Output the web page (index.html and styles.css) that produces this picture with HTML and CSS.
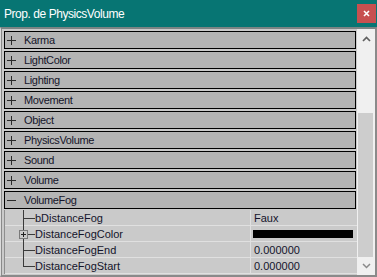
FILE: index.html
```html
<!DOCTYPE html>
<html>
<head>
<meta charset="utf-8">
<link rel="stylesheet" href="styles.css">
</head>
<body>
<div class="window">
  <div class="titlebar">
    <span class="title">Prop. de PhysicsVolume</span>
    <div class="close"><svg width="7" height="7" viewBox="0 0 7 7"><path d="M1 1 L6 6 M6 1 L1 6" stroke="#fff" stroke-width="1.6" fill="none"/></svg></div>
  </div>
  <div class="body">
    <div class="grid">
      <div class="group"><svg class="exp" width="9" height="9" viewBox="0 0 9 9"><path d="M0 4.5 H9 M4.5 0 V9" stroke="#2a2a2a" stroke-width="1"/></svg><span>Karma</span></div>
      <div class="group"><svg class="exp" width="9" height="9" viewBox="0 0 9 9"><path d="M0 4.5 H9 M4.5 0 V9" stroke="#2a2a2a" stroke-width="1"/></svg><span>LightColor</span></div>
      <div class="group"><svg class="exp" width="9" height="9" viewBox="0 0 9 9"><path d="M0 4.5 H9 M4.5 0 V9" stroke="#2a2a2a" stroke-width="1"/></svg><span>Lighting</span></div>
      <div class="group"><svg class="exp" width="9" height="9" viewBox="0 0 9 9"><path d="M0 4.5 H9 M4.5 0 V9" stroke="#2a2a2a" stroke-width="1"/></svg><span>Movement</span></div>
      <div class="group"><svg class="exp" width="9" height="9" viewBox="0 0 9 9"><path d="M0 4.5 H9 M4.5 0 V9" stroke="#2a2a2a" stroke-width="1"/></svg><span>Object</span></div>
      <div class="group"><svg class="exp" width="9" height="9" viewBox="0 0 9 9"><path d="M0 4.5 H9 M4.5 0 V9" stroke="#2a2a2a" stroke-width="1"/></svg><span>PhysicsVolume</span></div>
      <div class="group"><svg class="exp" width="9" height="9" viewBox="0 0 9 9"><path d="M0 4.5 H9 M4.5 0 V9" stroke="#2a2a2a" stroke-width="1"/></svg><span>Sound</span></div>
      <div class="group"><svg class="exp" width="9" height="9" viewBox="0 0 9 9"><path d="M0 4.5 H9 M4.5 0 V9" stroke="#2a2a2a" stroke-width="1"/></svg><span>Volume</span></div>
      <div class="group last"><svg class="exp" width="9" height="9" viewBox="0 0 9 9"><path d="M0 4.5 H9" stroke="#2a2a2a" stroke-width="1"/></svg><span>VolumeFog</span></div>
      <div class="props">
        <div class="prop">
          <div class="name"><svg class="tree" width="30" height="16" viewBox="0 0 30 16"><path d="M18.5 0 V16 M18 8.5 H30" stroke="#3a3a3a" stroke-width="1" fill="none"/></svg><span>bDistanceFog</span></div>
          <div class="value">Faux</div>
        </div>
        <div class="prop">
          <div class="name"><svg class="tree" width="30" height="16" viewBox="0 0 30 16"><path d="M18.5 0 V4 M18.5 13 V16 M23 8.5 H30" stroke="#3a3a3a" stroke-width="1" fill="none"/><rect x="14.5" y="4.5" width="8" height="8" fill="none" stroke="#7a7a7a" stroke-width="1"/><path d="M16 8.5 H21 M18.5 6 V11" stroke="#202020" stroke-width="1"/></svg><span>DistanceFogColor</span></div>
          <div class="value"><div class="swatch"></div></div>
        </div>
        <div class="prop">
          <div class="name"><svg class="tree" width="30" height="16" viewBox="0 0 30 16"><path d="M18.5 0 V16 M18 8.5 H30" stroke="#3a3a3a" stroke-width="1" fill="none"/></svg><span>DistanceFogEnd</span></div>
          <div class="value">0.000000</div>
        </div>
        <div class="prop">
          <div class="name"><svg class="tree" width="30" height="16" viewBox="0 0 30 16"><path d="M18.5 0 V9 M18 8.5 H30" stroke="#3a3a3a" stroke-width="1" fill="none"/></svg><span>DistanceFogStart</span></div>
          <div class="value">0.000000</div>
        </div>
      </div>
    </div>
    <div class="scrollbar">
      <div class="sb-btn up"><svg width="9" height="6" viewBox="0 0 9 6"><path d="M1 5 L4.5 1.5 L8 5" stroke="#606060" stroke-width="1.7" fill="none"/></svg></div>
      <div class="track"><div class="thumb"></div></div>
      <div class="sb-btn down"><svg width="9" height="6" viewBox="0 0 9 6"><path d="M1 1 L4.5 4.5 L8 1" stroke="#8a8a8a" stroke-width="1.5" fill="none"/></svg></div>
    </div>
  </div>
</div>
</body>
</html>
```

FILE: styles.css
```css
html, body {
  margin: 0;
  padding: 0;
}
body {
  width: 377px;
  height: 277px;
  overflow: hidden;
  font-family: "Liberation Sans", Arial, sans-serif;
  background: #cacaca;
}
.window {
  width: 377px;
  height: 277px;
  display: flex;
  flex-direction: column;
}
.titlebar {
  height: 27px;
  background: #077573;
  display: flex;
  align-items: center;
  justify-content: space-between;
  flex: none;
}
.title {
  color: #ffffff;
  font-size: 12px;
  letter-spacing: -0.45px;
  padding-left: 4px;
}
.close {
  width: 19px;
  height: 19px;
  margin-right: 1px;
  background: #c75050;
  display: flex;
  align-items: center;
  justify-content: center;
}
.close svg {
  display: block;
}
.body {
  height: 246px;
  border-top: 2px solid #7b8484;
  border-bottom: 2px solid #8a8a8a;
  border-left: 1px solid #dcdcdc;
  border-right: 2px solid #8a8a8a;
  display: flex;
  flex: none;
  background: #cacaca;
}
.grid {
  width: 353px;
  border-left: 1px solid #8a8a8a;
  padding-left: 2px;
  padding-top: 2px;
  flex: none;
}
.group {
  width: 350px;
  height: 16px;
  border: 1px solid #000000;
  background: #b4b4b4;
  margin-bottom: 2px;
  display: flex;
  align-items: center;
  font-size: 11px;
  letter-spacing: -0.35px;
  color: #14142a;
}
.group.last {
  margin-bottom: 1px;
}
.exp {
  display: block;
  margin-left: 2px;
  margin-right: 8px;
  flex: none;
}
.props {
  border-left: 1px solid #8e8e8e;
  width: 352px;
}
.prop {
  display: flex;
  height: 15px;
  border-bottom: 1px solid #e0e0e0;
  font-size: 11px;
  color: #14142a;
}
.name {
  width: 245px;
  display: flex;
  align-items: center;
  flex: none;
}
.tree {
  display: block;
  align-self: flex-start;
  flex: none;
}
.value {
  flex: 1;
  border-left: 1px solid #e0e0e0;
  padding-left: 3px;
  display: flex;
  align-items: center;
}
.swatch {
  width: 100px;
  height: 8px;
  background: #000000;
  margin-left: -1px;
}
.scrollbar {
  width: 18px;
  background: #f0f0f0;
  display: flex;
  flex-direction: column;
  flex: none;
}
.sb-btn {
  display: flex;
  align-items: center;
  justify-content: center;
  flex: none;
}
.sb-btn svg {
  display: block;
}
.sb-btn.up {
  height: 20px;
}
.sb-btn.down {
  height: 18px;
}
.track {
  flex: 1;
}
.thumb {
  margin-top: 64px;
  margin-left: 1px;
  width: 15px;
  height: 144px;
  background: #cdcdcd;
}
```
